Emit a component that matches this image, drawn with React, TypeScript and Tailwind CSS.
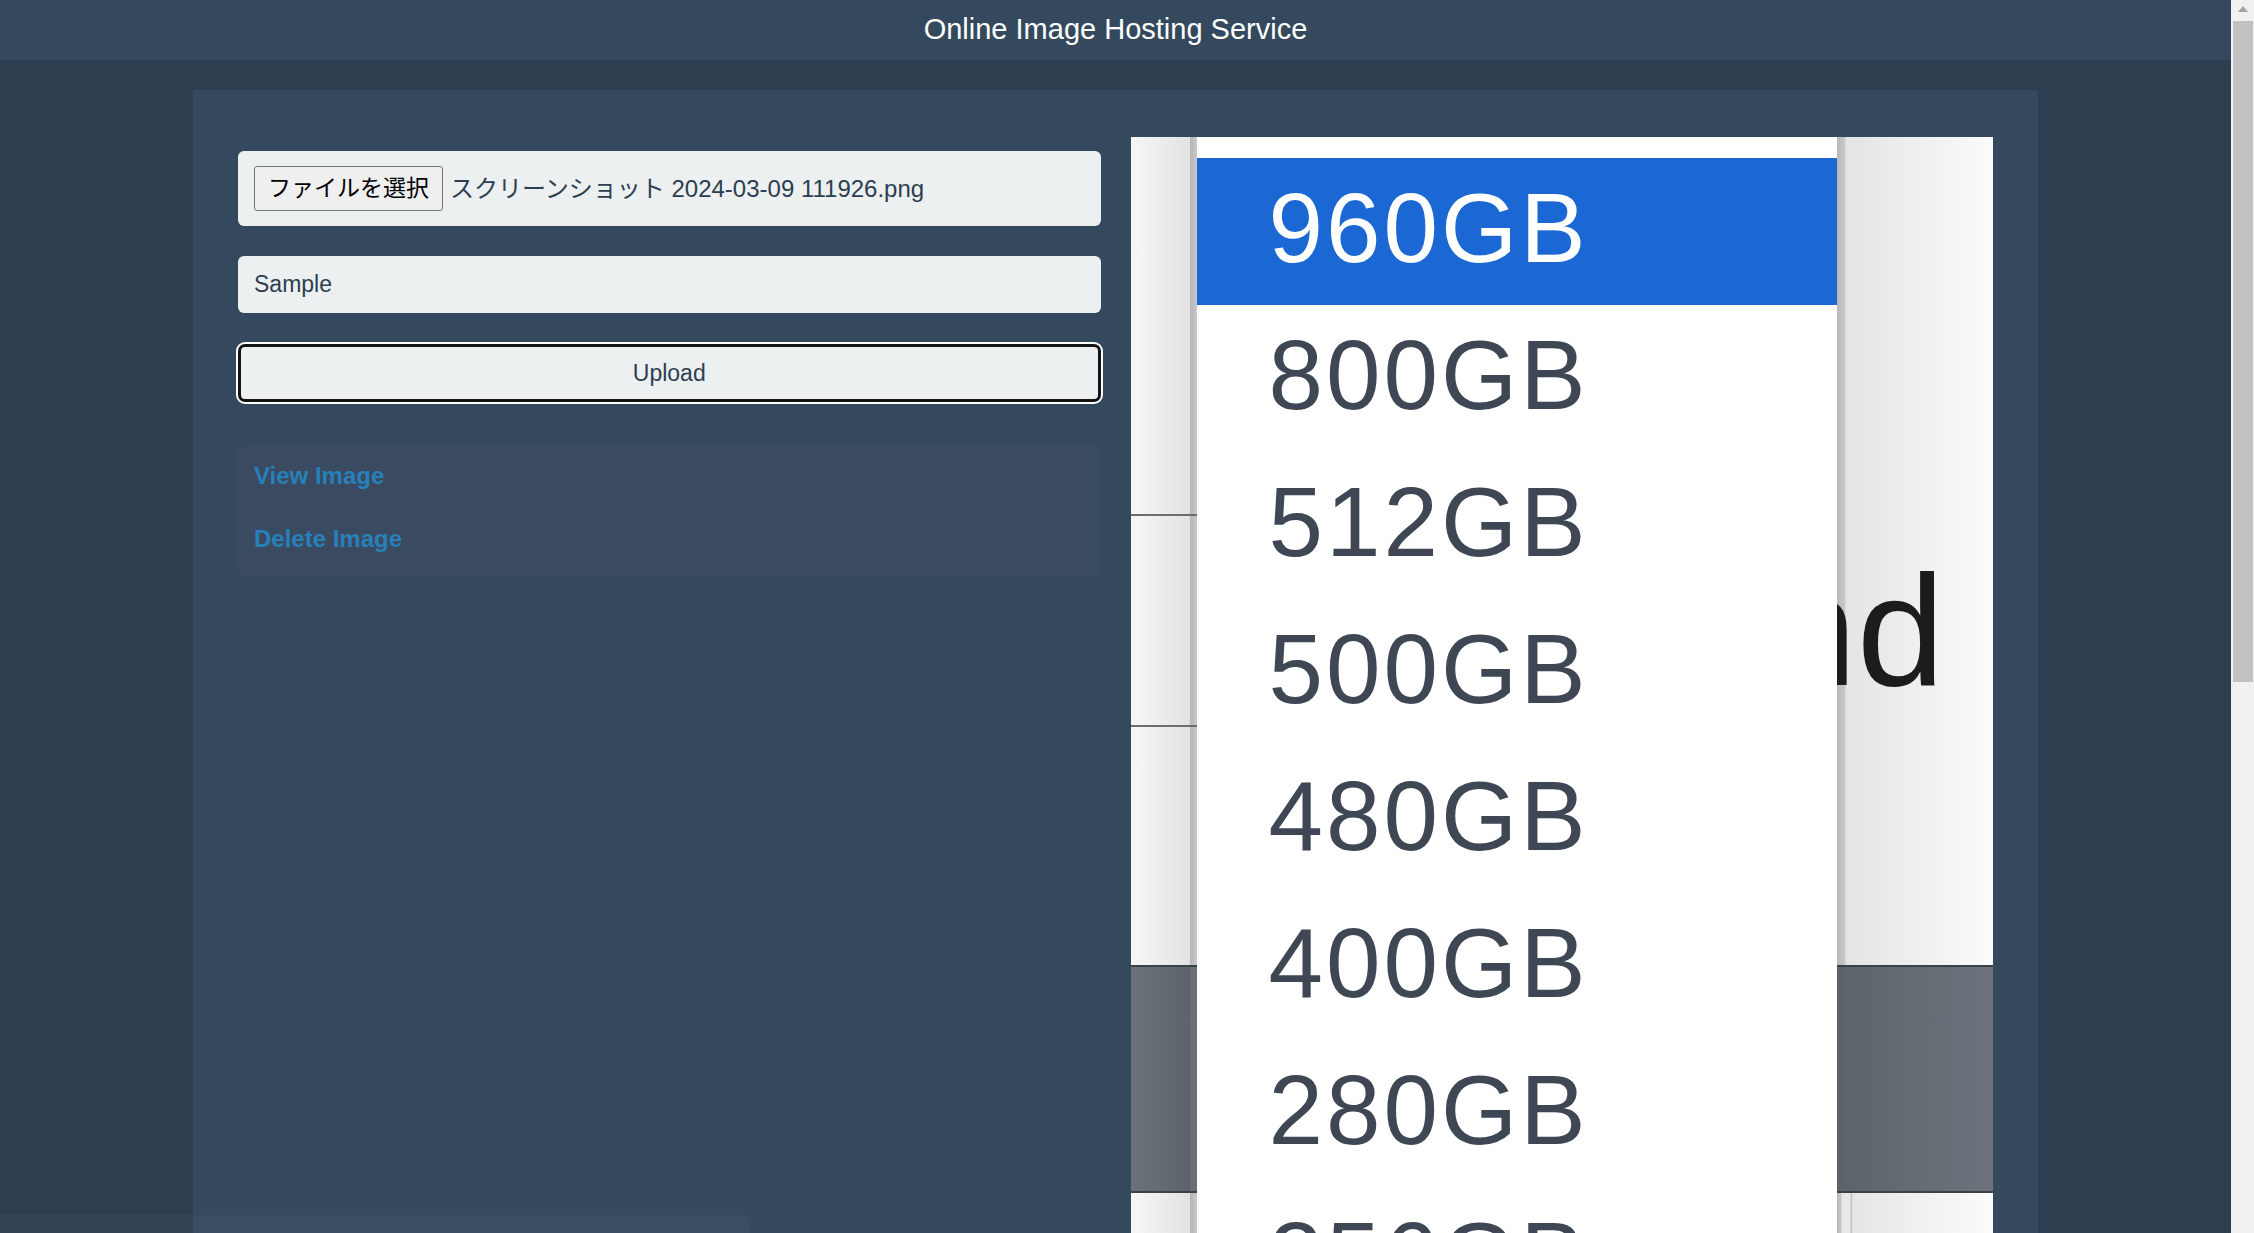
import React from "react";

const items = ["960GB", "800GB", "512GB", "500GB", "480GB", "400GB", "280GB", "256GB"];

function Picture() {
  return (
    <div className="relative h-[1150px] overflow-hidden flex bg-white">
      {/* left strip */}
      <div className="w-[66px] shrink-0 flex flex-col">
        <div className="h-[377px] bg-[linear-gradient(to_right,#f7f7f7,#e2e2e2_59px,#b5b5b5_59px,#c9c9c9_66px)]" />
        <div className="h-[2px] bg-[#6d6d6d]" />
        <div className="h-[209px] bg-[linear-gradient(to_right,#f7f7f7,#e2e2e2_59px,#b5b5b5_59px,#c9c9c9_66px)]" />
        <div className="h-[2px] bg-[#6d6d6d]" />
        <div className="h-[238px] bg-[linear-gradient(to_right,#f7f7f7,#e2e2e2_59px,#b5b5b5_59px,#c9c9c9_66px)]" />
        <div className="h-[2px] bg-[#3c4148]" />
        <div className="h-[224px] bg-[linear-gradient(to_right,#6b727b,#5c636b_59px,#686e76_59px,#6a7078_66px)]" />
        <div className="h-[2px] bg-[#3c4148]" />
        <div className="flex-1 bg-[linear-gradient(to_right,#f7f7f7,#e2e2e2_59px,#b5b5b5_59px,#c9c9c9_66px)]" />
      </div>

      {/* dropdown list */}
      <div className="flex-1 min-w-0 flex flex-col bg-white">
        <div className="h-[21px] shrink-0" />
        {items.map((it, i) => (
          <div
            key={it}
            className={
              i === 0
                ? "h-[147px] shrink-0 flex items-center pb-[7px] pl-[72px] bg-[#1b67d4] text-white text-[98px] tracking-[3px] leading-none"
                : "h-[147px] shrink-0 flex items-center pb-[7px] pl-[72px] text-[#3e4753] text-[98px] tracking-[3px] leading-none"
            }
          >
            {it}
          </div>
        ))}
      </div>

      {/* right area */}
      <div className="w-[156px] shrink-0 flex flex-col">
        <div className="relative h-[828px] overflow-hidden bg-[linear-gradient(to_right,#b8b8b8,#c8c8c8_8px,#e4e4e4_9px,#fbfbfb)]">
          <div className="absolute left-[-68px] top-[414px] text-[158px] leading-none text-[#1c1c1c] whitespace-nowrap">
            nd
          </div>
        </div>
        <div className="h-[2px] bg-[#3c4148]" />
        <div className="h-[224px] bg-[linear-gradient(to_right,#5a6169,#5d646c_9px,#6c737c)]" />
        <div className="h-[2px] bg-[#3c4148]" />
        <div className="flex-1 bg-[linear-gradient(to_right,#b8b8b8,#c8c8c8_4px,#e8e8e8_5px,#e8e8e8_13px,#bcbcbc_14px,#e6e6e6_16px,#fbfbfb)]" />
      </div>
    </div>
  );
}

export default function App() {
  return (
    <div className="flex h-screen w-full overflow-hidden bg-[#2c3e50] font-['Liberation_Sans','Noto_Sans_CJK_JP',Arial,sans-serif]">
      <div className="relative flex-1 min-w-0 flex flex-col overflow-hidden">
        <header className="h-[60px] shrink-0 bg-[#34495e] flex items-center justify-center text-white text-[29px]">
          Online Image Hosting Service
        </header>
        <main className="flex-1 pt-[30px]">
          <div className="mx-auto w-[1845px] h-[1200px] bg-[#34495e] px-[45px] pt-[47px] grid grid-cols-2 gap-[30px] items-start">
            {/* left column */}
            <div className="flex flex-col mt-[14px]">
              <div className="h-[75px] rounded-[6px] bg-[#ecf0f1] flex items-center px-[16px] gap-[7px]">
                <div className="h-[45px] px-[13px] border border-[#767676] bg-[#efefef] rounded-[3px] text-[23px] text-black flex items-center">
                  ファイルを選択
                </div>
                <span className="text-[24px] text-[#2c3e50]">スクリーンショット 2024-03-09 111926.png</span>
              </div>
              <div className="mt-[30px] h-[57px] rounded-[6px] bg-[#ecf0f1] px-[16px] flex items-center text-[23px] text-[#2c3e50]">
                Sample
              </div>
              <button className="mt-[31px] h-[58px] w-full rounded-[7px] border-[3px] border-[#141414] bg-[#ecf0f1] ring-2 ring-white text-[23px] text-[#2c3e50] flex items-center justify-center">
                Upload
              </button>
              <div className="mt-[44px] h-[130px] rounded-[6px] bg-[#3a4a60] px-[16px] pt-[14px] flex flex-col gap-[31px]">
                <a className="h-[32px] leading-[32px] text-[24px] font-bold text-[#2980b9]">View Image</a>
                <a className="h-[32px] leading-[32px] text-[24px] font-bold text-[#2980b9]">Delete Image</a>
              </div>
            </div>
            {/* right column */}
            <Picture />
          </div>
        </main>
        <div className="absolute bottom-0 left-0 h-[18px] w-[749px] rounded-tr-[4px] bg-white/[0.03]" />
      </div>
      {/* scrollbar */}
      <div className="w-[23px] shrink-0 bg-[#f1f1f1] flex flex-col">
        <div className="h-[17px] flex items-center justify-center">
          <div className="w-0 h-0 border-x-[5px] border-x-transparent border-b-[6px] border-b-[#a3a3a3]" />
        </div>
        <div className="mt-[4px] ml-[2px] mr-[1px] h-[661px] bg-[#c1c1c1]" />
      </div>
    </div>
  );
}
